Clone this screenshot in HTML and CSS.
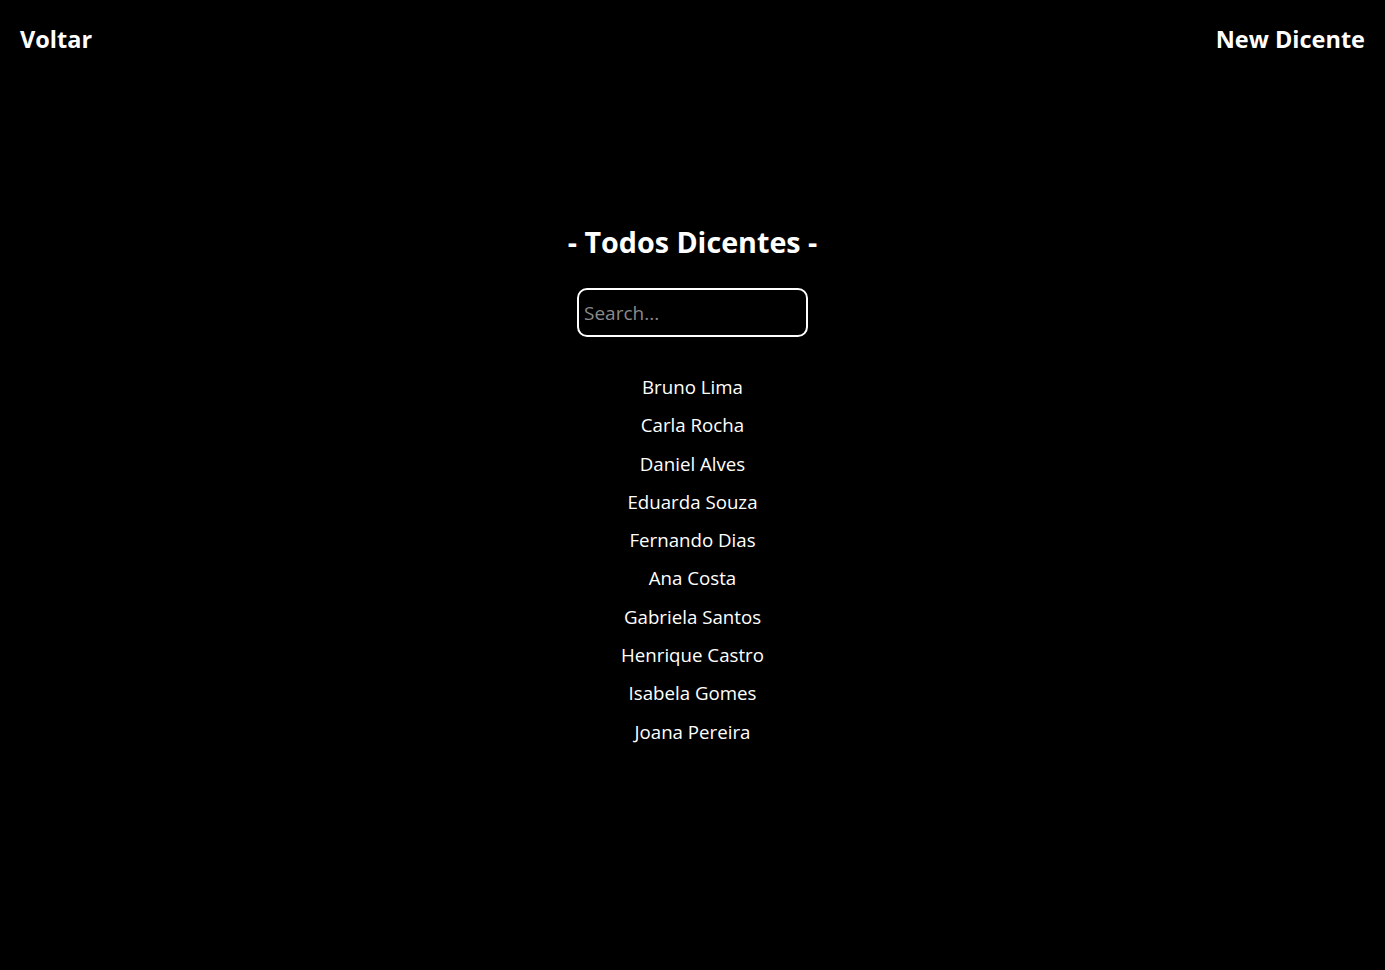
FILE: index.html
```html
<!DOCTYPE html>
<html lang="pt">
<head>
<meta charset="utf-8">
<title>Dicentes</title>
<link rel="stylesheet" href="styles.css">
</head>
<body>
<header class="topbar">
  <a class="nav-link" href="#">Voltar</a>
  <a class="nav-link" href="#">New Dicente</a>
</header>
<main class="content">
  <h1 class="title">- Todos Dicentes -</h1>
  <input class="search" type="text" placeholder="Search...">
  <ul class="list">
    <li>Bruno Lima</li>
    <li>Carla Rocha</li>
    <li>Daniel Alves</li>
    <li>Eduarda Souza</li>
    <li>Fernando Dias</li>
    <li>Ana Costa</li>
    <li>Gabriela Santos</li>
    <li>Henrique Castro</li>
    <li>Isabela Gomes</li>
    <li>Joana Pereira</li>
  </ul>
</main>
</body>
</html>
```
FILE: styles.css
```css
html, body {
  margin: 0;
  padding: 0;
  background: #000;
  color: #fff;
  font-family: "Open Sans", "Noto Sans", sans-serif;
}
.topbar {
  display: flex;
  justify-content: space-between;
  align-items: center;
  padding: 22px 20px;
}
.nav-link {
  color: #fff;
  text-decoration: none;
  font-weight: 700;
  font-size: 23.5px;
  line-height: 34px;
}
.content {
  display: flex;
  flex-direction: column;
  align-items: center;
  padding-top: 144px;
}
.title {
  margin: 0;
  font-size: 28.7px;
  font-weight: 700;
  line-height: 40px;
}
.search {
  margin-top: 26px;
  box-sizing: border-box;
  width: 231px;
  height: 49px;
  border: 2px solid #fff;
  border-radius: 10px;
  background: #000;
  color: #fff;
  font-family: inherit;
  font-size: 19px;
  padding: 0 5px;
  outline: none;
}
.search::placeholder {
  color: #8a8a8a;
}
.list {
  list-style: none;
  margin: 31px 0 0;
  padding: 0;
  text-align: center;
  font-size: 18.7px;
}
.list li {
  line-height: 38.3px;
}
```
